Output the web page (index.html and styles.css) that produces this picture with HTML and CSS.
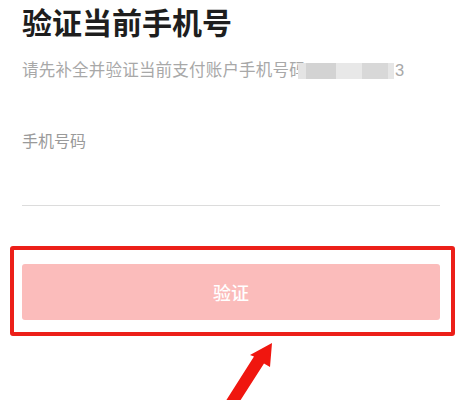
FILE: index.html
```html
<!DOCTYPE html>
<html lang="zh-CN">
<head>
    <meta charset="UTF-8">
    <meta name="viewport" content="width=device-width, initial-scale=1.0">
    <title>验证当前手机号</title>
    <link rel="stylesheet" href="styles.css">
</head>
<body>

    <div class="page">
        <h1 class="title">验证当前手机号</h1>
        <p class="tip">请先补全并验证当前支付账户手机号码<span class="blur"><i class="b1"></i><i class="b2"></i><i class="b3"></i><i class="b4"></i></span>3</p>

        <div class="field">
            <label class="field-label">手机号码</label>
        </div>

        <div class="mark">
            <button class="btn-verify">验证</button>
        </div>
    </div>

    <!-- arrow annotation -->
    <svg class="arrow" width="467" height="400" viewBox="0 0 467 400">
        <polygon fill="#f0160f" points="272,343 270,367 264,363.5 231,415 221,408.5 254,356.5 250,355"/>
    </svg>

</body>
</html>
```

FILE: styles.css
```css
body {
    margin: 0;
    background: #fff;
    font-family: "Noto Sans CJK SC", "Noto Sans", sans-serif;
}

.page {
    padding: 1px 27px 0 22px;
}

.title {
    margin: 0;
    font-size: 30px;
    line-height: 40px;
    font-weight: bold;
    color: #1e1e1e;
}

.tip {
    margin: 19px 0 0;
    font-size: 16.5px;
    line-height: 20px;
    color: #a8a8a8;
    white-space: nowrap;
    letter-spacing: 0.2px;
    font-family: "Liberation Sans", "Noto Sans CJK SC", sans-serif;
}

.blur {
    display: inline-flex;
    vertical-align: -3px;
    height: 16px;
    width: 96px;
    margin-left: -8px;
    margin-right: 1px;
    background: #e6e6e6;
}

.blur i {
    display: block;
    height: 16px;
}

.b1 { width: 8px; background: #e4e4e4; }
.b2 { width: 30px; background: #d3d3d3; }
.b3 { width: 26px; background: #e8e8e8; }
.b4 { width: 26px; background: #d8d8d8; }

.field {
    margin-top: 50px;
    height: 75px;
    border-bottom: 1.5px solid #dcdcdc;
}

.field-label {
    display: block;
    font-size: 16px;
    line-height: 20px;
    color: #9a9a9a;
}

.mark {
    margin: 40px -15px 0 -12px;
    padding: 14px 11px 12px 8px;
    border: 4px solid #ec1f19;
    border-radius: 3px;
}

.btn-verify {
    display: block;
    width: 100%;
    height: 56px;
    border: none;
    border-radius: 3px;
    background: #fbbcbb;
    color: #fff;
    font-family: inherit;
    font-size: 18px;
    font-weight: 500;
}

.arrow {
    position: absolute;
    left: 0;
    top: 0;
}
```
